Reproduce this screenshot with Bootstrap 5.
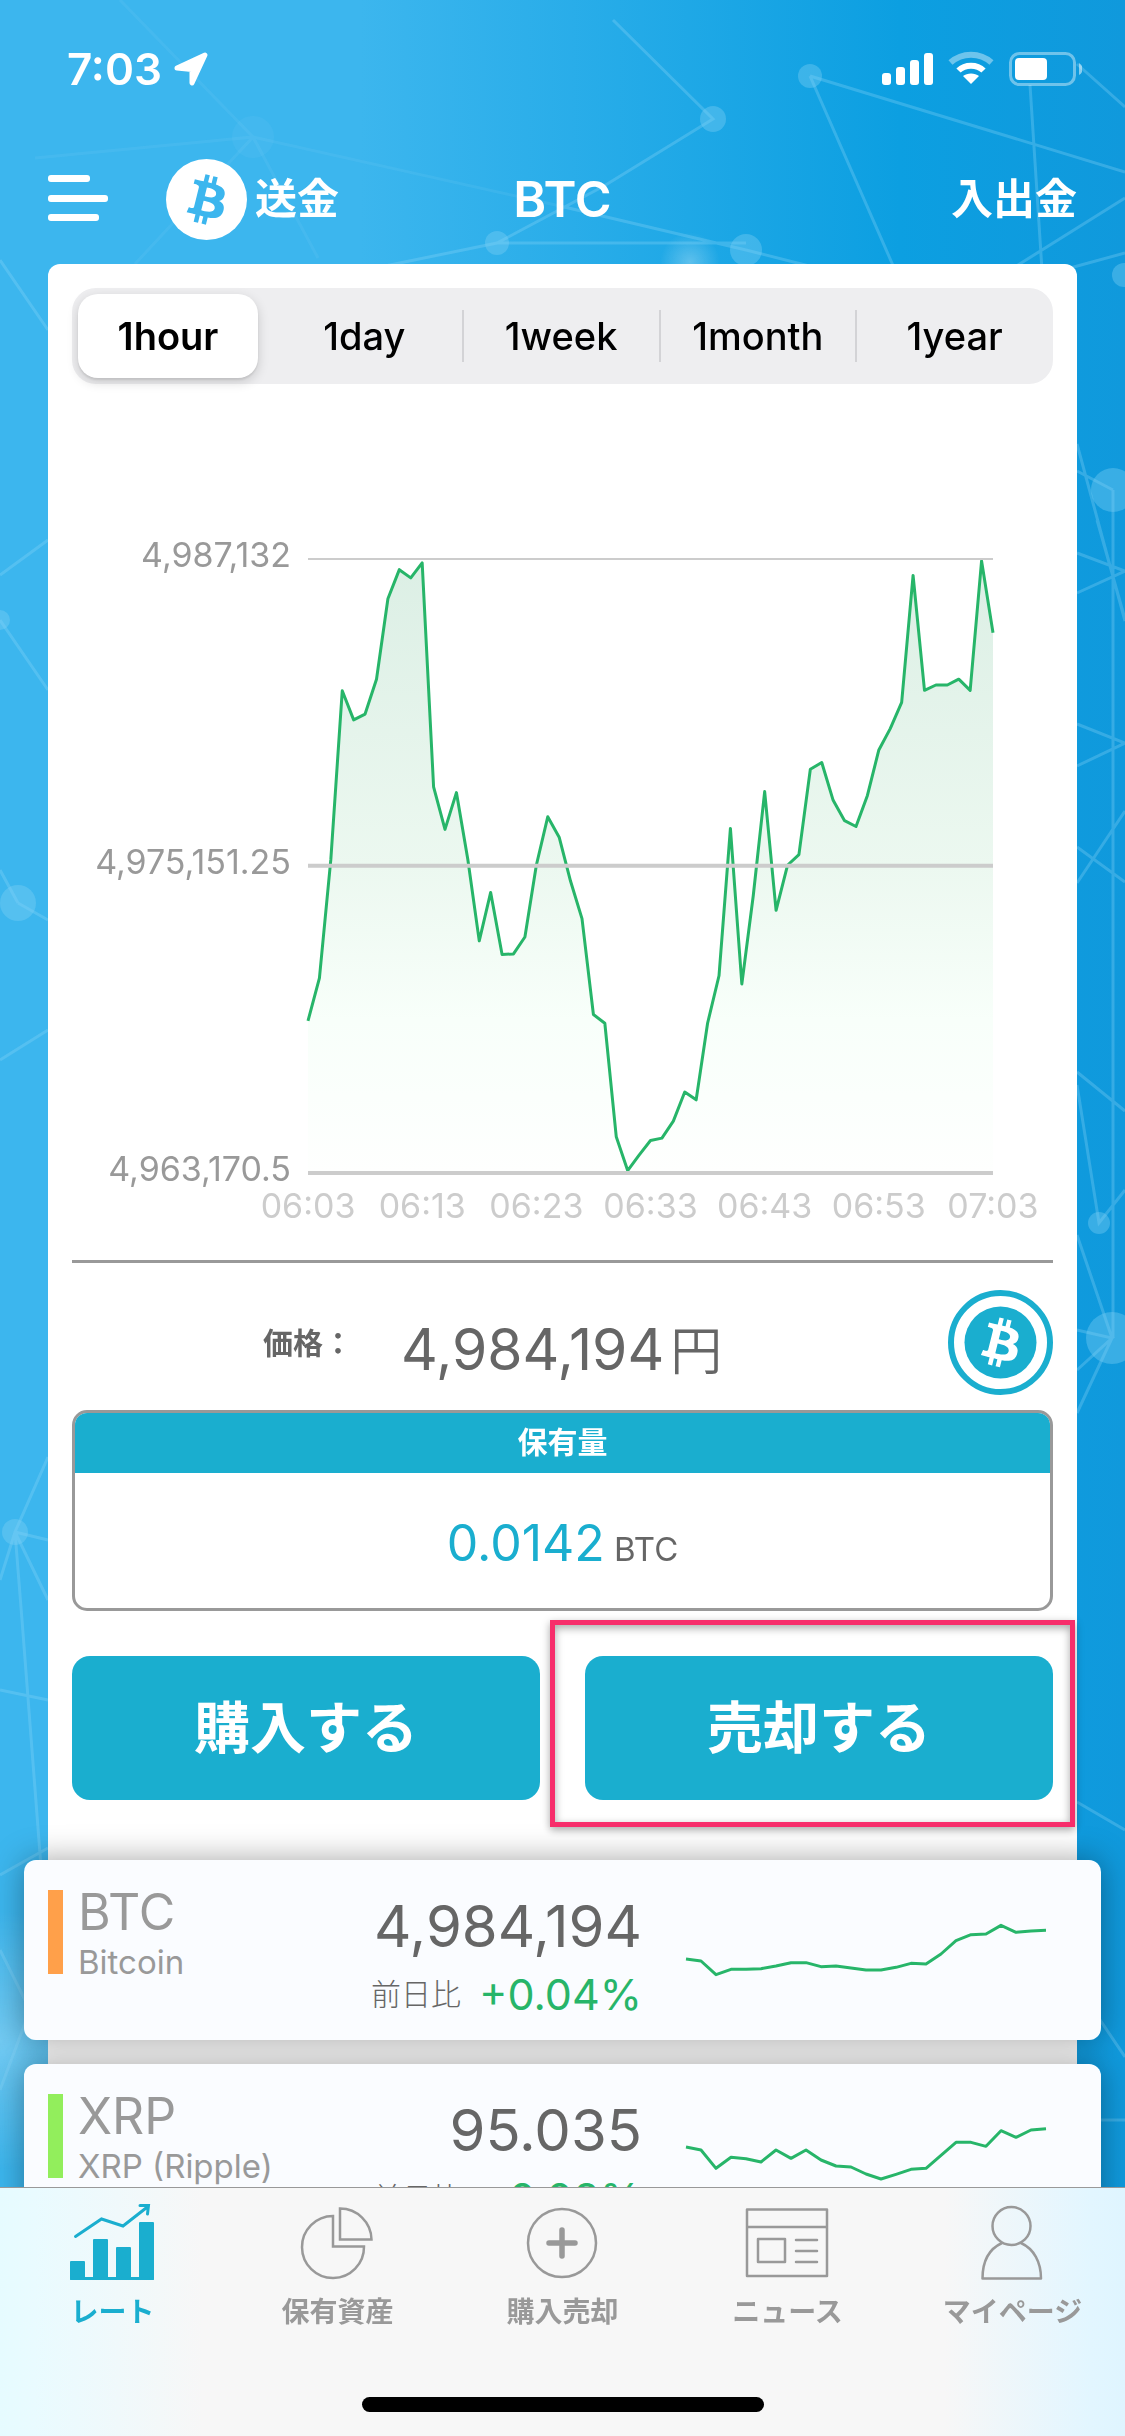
<!DOCTYPE html>
<html lang="ja">
<head>
<meta charset="utf-8">
<meta name="viewport" content="width=device-width, initial-scale=1">
<title>BTC レート</title>
<link href="https://cdn.jsdelivr.net/npm/bootstrap@5.3.0/dist/css/bootstrap.min.css" rel="stylesheet">
<style>
  :root { --teal: #1aaecf; --ink: #666; --soft: #999; --up: #27b569; }
  body { font-family: Inter, "Noto Sans CJK JP", sans-serif; color: var(--ink); line-height: 1;
    background: linear-gradient(90deg, #3cb6ee 0, #3cb6ee 32%, #0c9fe1 80%, #1099dc 100%); }
  a { color: inherit; text-decoration: none; }
  svg { display: block; }
  .network { z-index: -1; }

  .status-bar { height: 140px; padding: 47px 43px 0 67px; }
  .status-bar > div { height: 44px; }
  .clock { font-size: 44px; font-weight: 600; }
  .top-nav { height: 118px; margin-bottom: 6px; padding: 0 48px; font-size: 42px; font-weight: 700; }
  .top-nav > * { flex: 1 1 0; }
  .top-nav h1 { font-size: 50px; font-weight: 600; margin: 0; }
  .menu-btn { background: none; border: 0; padding: 0; margin-right: 58px; }

  .panel { background: #fff; margin: 0 48px; padding: 24px 24px 0; border-radius: 12px 12px 0 0; min-height: 1924px; }
  .periods { background: #eeeef0; border-radius: 24px; height: 96px; padding: 6px 0 6px 6px; }
  .periods label { flex: 1 1 0; border-radius: 20px; font-size: 38px; font-weight: 500; color: #000; position: relative; }
  .periods label.split::before { content: ""; position: absolute; left: -1px; top: 16px; height: 52px; width: 2px; background: #d3d3d6; }
  .periods label.first { flex: 0 0 180px; margin-right: 8px; }
  .periods .btn-check:checked + label { background: #fff; font-weight: 600; box-shadow: 0 4px 12px rgba(0,0,0,.16), 0 2px 2px rgba(0,0,0,.08); }

  .chart { margin-top: 153px; gap: 17px; padding-right: 60px; }
  .y-axis { width: 219px; height: 650px; font-size: 34px; line-height: 36px; color: var(--soft); }
  .plot { height: 614px; margin-top: 22px; overflow: visible; }
  .x-axis { margin: 1px 3px 0 179px; font-size: 34px; line-height: 36px; color: #ccc; }
  .x-axis span { flex: 1 1 0; text-align: center; }
  .rule { height: 3px; background: var(--soft); margin-top: 36px; }
  .price-row { padding: 27px 0 15px 191px; }
  .price-row dt { font-size: 30px; font-weight: 600; }
  .price-row dd { font-size: 57px; line-height: 60px; padding-top: 16px; margin: 0 0 0 48px; }
  .price-row small { font-size: 52px; font-weight: 350; margin-left: 6px; }

  .holding { border: 3px solid var(--soft); border-radius: 15px; overflow: hidden; }
  .holding h2 { background: var(--teal); color: #fff; font-size: 30px; font-weight: 700; line-height: 58px; height: 60px; margin: 0; text-align: center; }
  .holding p { height: 135px; line-height: 140px; margin: 0; text-align: center; font-size: 33px; }
  .holding b { font-size: 50px; font-weight: 400; color: var(--teal); }

  .trade { margin-top: 45px; gap: 45px; }
  .trade > div { flex: 1 1 0; position: relative; }
  .trade-btn { height: 144px; border-radius: 18px; background: var(--teal); color: #fff; font-size: 56px; font-weight: 700; border: 0; }
  .trade-btn:hover { background: #159cba; color: #fff; }
  .callout-frame { position: absolute; inset: -36px -22px -27px -35px; border: 5px solid #f72d6b; pointer-events: none;
    box-shadow: 0 3px 8px rgba(0,0,0,.35), inset 0 3px 8px rgba(0,0,0,.35); }

  .coin-list { margin: 60px -48px 0; gap: 24px; isolation: isolate; }
  .coin-item { position: relative; height: 180px; flex: none; display: grid; grid-template-columns: 1fr 1fr 360px; column-gap: 44px;
    padding: 30px 55px 0 24px; background: #fafcff; border-radius: 12px; }
  .coin-item::before { content: ""; position: absolute; inset: 0; z-index: -1; border-radius: 12px; box-shadow: 0 0 32px rgba(0,0,0,.36); }
  .coin-tag { width: 15px; height: 84px; margin-right: 15px; }
  .tag-btc { background: #ffa04a; }
  .tag-xrp { background: #92ee5c; }
  .coin-code { font-size: 50px; line-height: 44px; color: var(--soft); font-weight: 400; }
  .coin-name { font-size: 33px; line-height: 40px; color: var(--soft); margin-top: 8px; white-space: nowrap; }
  .coin-price { font-size: 58px; line-height: 60px; padding-top: 6px; }
  .coin-diff { font-size: 30px; line-height: 44px; margin-top: 16px; white-space: nowrap; font-weight: 300; gap: 18px; }
  .coin-diff span { font-size: 43px; color: var(--up); font-weight: 400; }
  .spark { height: 55px; margin-top: 33px; overflow: visible; }

  .tab-bar { height: 249px; border-top: 1px solid #999; padding: 16px 0 24px;
    background: linear-gradient(90deg, #e6fbff 0, #e9fbff 3%, #f7f7f7 18%, #f7f7f7 84%, #e2f6ff 97%, #dff5ff 100%); }
  .tab-bar a { flex: 1 1 0; gap: 12px; font-size: 28px; line-height: 36px; font-weight: 700; color: var(--soft); }
  .tab-bar a.active { color: var(--teal); }
  .home-bar { width: 402px; height: 15px; border-radius: 8px; background: #000; }
</style>
</head>
<body class="vh-100 d-flex flex-column overflow-hidden">

<svg class="network position-fixed top-0 start-0 w-100 h-100" viewBox="0 0 1125 2436" preserveAspectRatio="none" aria-hidden="true">
  <defs>
    <radialGradient id="glow"><stop offset="0" stop-color="#fff" stop-opacity=".28"/><stop offset="1" stop-color="#fff" stop-opacity="0"/></radialGradient>
  </defs>
  <circle cx="690" cy="262" r="30" fill="url(#glow)"/>
  <circle cx="0" cy="2040" r="130" fill="url(#glow)"/>
  <g stroke="#8fd6f8" stroke-opacity=".3" stroke-width="3" fill="none">
    <path stroke-opacity=".12" d="M253 137L35 158M253 137L120 0M253 137L135 264M253 137L318 258M253 137L560 206"/>
    <path d="M560 206L746 250L825 270M613 20L713 119L604 186L497 243H746M497 243L385 266M810 76L1125 172M810 76L895 270M1030 85L1042 270M1077 64L1125 107M1125 198L1010 270M1070 268L1125 253"/>
    <path d="M1077 444L1125 621M1077 471L1113 490M1097 520L1125 619M1077 553L1125 571L1077 593M1077 724L1125 743L1077 766M1077 847L1125 882M1077 883L1125 811M1077 1072L1125 1111M1077 1085L1099 1223L1125 1190M1077 1235L1112 1338M1077 1330L1112 1338L1077 1370M1112 1338L1077 1413M1113 490V1338M1077 1802L1125 1830M1090 2005L1125 2057M1095 2120H1125"/>
    <path d="M0 260L48 330M0 575L48 540M0 620L48 690M18 903L48 920M18 903L0 870M48 1457L15 1532L0 1580M15 1532L48 1540M15 1532L48 1600M15 1532L22 1620L42 1880M0 1690L48 1700M0 1875L48 1848M0 1950L30 2010L0 2090M0 1060L48 1030"/>
  </g>
  <g fill="#7fcff5" fill-opacity=".38">
    <circle cx="253" cy="137" r="21" fill-opacity=".12"/><circle cx="713" cy="119" r="13"/><circle cx="810" cy="76" r="12"/>
    <circle cx="497" cy="243" r="12"/><circle cx="746" cy="250" r="16"/><circle cx="1113" cy="490" r="22"/>
    <circle cx="1099" cy="1223" r="11"/><circle cx="1112" cy="1338" r="26"/><circle cx="0" cy="620" r="10"/>
    <circle cx="18" cy="903" r="18"/><circle cx="15" cy="1532" r="13"/><circle cx="1124" cy="275" r="12"/>
  </g>
</svg>

<div class="flex-fill overflow-hidden" style="min-height:0">
  <div class="status-bar d-flex justify-content-between text-white">
    <div class="d-flex align-items-center">
      <span class="clock">7:03</span>
      <svg class="ms-2" width="40" height="36" viewBox="0 0 40 36" fill="#fff" stroke="#fff" stroke-width="5" stroke-linejoin="round"><path d="M35 4L22 32V18.500L7 17Z"/></svg>
    </div>
    <div class="d-flex align-items-center">
      <svg width="200" height="36" viewBox="0 0 200 36">
        <g fill="#fff">
          <rect x="0" y="22" width="9" height="12" rx="3"/><rect x="14" y="16" width="9" height="18" rx="3"/>
          <rect x="28" y="9" width="9" height="25" rx="3"/><rect x="42" y="2" width="9" height="32" rx="3"/>
          <path d="M81 26C85 22.500 93 22.500 97 26L89 34Z" transform="translate(0 -1)"/>
          <rect x="133" y="7" width="32" height="22" rx="4"/><path d="M197 12C202 15 202 21 197 24Z" opacity=".5"/>
        </g>
        <g fill="none" stroke="#fff">
          <path d="M76.500 19.500C83 13 95 13 101.500 19.500" stroke-width="6"/>
          <path d="M68.500 11.500C80 1 98 1 109.500 11.500" stroke-width="6" opacity=".4"/>
          <rect x="128.500" y="2.500" width="64" height="31" rx="9" stroke-width="3" opacity=".4"/>
        </g>
      </svg>
    </div>
  </div>

  <nav class="top-nav d-flex align-items-center text-white">
    <div class="d-flex align-items-center">
      <button class="menu-btn" type="button" aria-label="メニュー">
        <svg width="60" height="48" viewBox="0 0 60 48" fill="#fff"><rect width="42" height="7" rx="3"/><rect y="20" width="60" height="7" rx="3"/><rect y="39" width="51" height="7" rx="3"/></svg>
      </button>
      <a href="#" class="d-flex align-items-center text-nowrap">
        <svg class="me-2 flex-shrink-0" width="81" height="81" viewBox="0 0 32 32"><circle cx="16" cy="16" r="16" fill="#fff"/>
          <path fill="#3cb6ee" d="M23.189 14.02c.314-2.096-1.283-3.223-3.465-3.975l.708-2.84-1.728-.43-.69 2.765c-.454-.114-.92-.22-1.385-.326l.695-2.783L15.596 6l-.708 2.839c-.376-.086-.746-.17-1.104-.26l.002-.009-2.384-.595-.46 1.846s1.283.294 1.256.312c.7.175.826.638.805 1.006l-.806 3.235c.048.012.11.03.18.057l-.183-.045-1.13 4.532c-.086.212-.303.531-.793.41.018.025-1.256-.313-1.256-.313l-.858 1.978 2.25.561c.418.105.828.215 1.231.318l-.715 2.872 1.727.43.708-2.84c.472.127.93.245 1.378.357l-.706 2.828 1.728.43.715-2.866c2.948.558 5.164.333 6.097-2.333.752-2.146-.037-3.385-1.588-4.192 1.13-.26 1.98-1.003 2.207-2.538zm-3.95 5.538c-.533 2.147-4.148.986-5.32.695l.95-3.805c1.172.293 4.929.872 4.37 3.11zm.535-5.569c-.487 1.953-3.495.96-4.47.717l.86-3.45c.975.243 4.118.696 3.61 2.733z"/></svg>
        送金</a>
    </div>
    <h1 class="text-center">BTC</h1>
    <a href="#" class="text-end">入出金</a>
  </nav>

  <main class="panel">
    <div class="periods d-flex" role="group" aria-label="期間">
      <input type="radio" class="btn-check" name="period" id="p1" checked><label for="p1" class="first d-flex align-items-center justify-content-center">1hour</label>
      <input type="radio" class="btn-check" name="period" id="p2"><label for="p2" class="d-flex align-items-center justify-content-center">1day</label>
      <input type="radio" class="btn-check" name="period" id="p3"><label for="p3" class="split d-flex align-items-center justify-content-center">1week</label>
      <input type="radio" class="btn-check" name="period" id="p4"><label for="p4" class="split d-flex align-items-center justify-content-center">1month</label>
      <input type="radio" class="btn-check" name="period" id="p5"><label for="p5" class="split d-flex align-items-center justify-content-center">1year</label>
    </div>

    <div class="chart d-flex">
      <div class="y-axis d-flex flex-column justify-content-between text-end flex-shrink-0">
        <span>4,987,132</span><span>4,975,151.25</span><span>4,963,170.5</span>
      </div>
      <svg class="plot flex-fill" viewBox="0 80 60 1267" preserveAspectRatio="none" width="100" role="img" aria-label="BTC 1時間チャート">
        <defs><linearGradient id="area" x1="0" y1="0" x2="0" y2="1"><stop offset="0" stop-color="#dcefe5"/><stop offset=".5" stop-color="#ecf8f0"/><stop offset=".75" stop-color="#f8fffa"/><stop offset="1" stop-color="#fefffe"/></linearGradient></defs>
        <polygon fill="url(#area)" points="0,1347 0,1033 1,945 2,700 3,352 4,412 5,400 6,328 7,162 8,102 9,119 10,88 11,550 12,638 13,562 14,700 15,868 16,768 17,896 18,895 19,860 20,712 21,612 22,654 23,745 24,822 25,1020 26,1038 27,1272 28,1342 29,1310 30,1280 31,1275 32,1240 33,1180 34,1196 35,1038 36,940 37,636 38,957 39,775 40,560 41,805 42,712 43,690 44,514 45,500 46,578 47,620 48,632 49,568 50,474 51,430 52,376 53,114 54,351 55,340 56,340 57,328 58,351 59,84 60,232 60,1347"/>
        <polyline fill="none" stroke="#27b569" stroke-width="3" stroke-linejoin="round" vector-effect="non-scaling-stroke" points="0,1033 1,945 2,700 3,352 4,412 5,400 6,328 7,162 8,102 9,119 10,88 11,550 12,638 13,562 14,700 15,868 16,768 17,896 18,895 19,860 20,712 21,612 22,654 23,745 24,822 25,1020 26,1038 27,1272 28,1342 29,1310 30,1280 31,1275 32,1240 33,1180 34,1196 35,1038 36,940 37,636 38,957 39,775 40,560 41,805 42,712 43,690 44,514 45,500 46,578 47,620 48,632 49,568 50,474 51,430 52,376 53,114 54,351 55,340 56,340 57,328 58,351 59,84 60,232"/>
        <g stroke="#ccc"><path d="M0 80H60" stroke-width="2" vector-effect="non-scaling-stroke"/><path d="M0 713H60M0 1347H60" stroke-width="4" vector-effect="non-scaling-stroke"/></g>
      </svg>
    </div>
    <div class="x-axis d-flex"><span>06:03</span><span>06:13</span><span>06:23</span><span>06:33</span><span>06:43</span><span>06:53</span><span>07:03</span></div>
    <div class="rule"></div>

    <div class="price-row d-flex align-items-center">
      <dl class="d-flex align-items-center m-0"><dt>価格：</dt><dd>4,984,194<small>円</small></dd></dl>
      <svg class="ms-auto" width="105" height="105" viewBox="0 0 105 105"><circle cx="52.500" cy="52.500" r="49.500" fill="#fff" stroke="#1aaecf" stroke-width="6"/><circle cx="52.500" cy="52.500" r="36" fill="#1aaecf"/>
        <path fill="#fff" transform="translate(12.500 12.500) scale(2.5)" d="M23.189 14.02c.314-2.096-1.283-3.223-3.465-3.975l.708-2.84-1.728-.43-.69 2.765c-.454-.114-.92-.22-1.385-.326l.695-2.783L15.596 6l-.708 2.839c-.376-.086-.746-.17-1.104-.26l.002-.009-2.384-.595-.46 1.846s1.283.294 1.256.312c.7.175.826.638.805 1.006l-.806 3.235c.048.012.11.03.18.057l-.183-.045-1.13 4.532c-.086.212-.303.531-.793.41.018.025-1.256-.313-1.256-.313l-.858 1.978 2.25.561c.418.105.828.215 1.231.318l-.715 2.872 1.727.43.708-2.84c.472.127.93.245 1.378.357l-.706 2.828 1.728.43.715-2.866c2.948.558 5.164.333 6.097-2.333.752-2.146-.037-3.385-1.588-4.192 1.13-.26 1.98-1.003 2.207-2.538zm-3.95 5.538c-.533 2.147-4.148.986-5.32.695l.95-3.805c1.172.293 4.929.872 4.37 3.11zm.535-5.569c-.487 1.953-3.495.96-4.47.717l.86-3.45c.975.243 4.118.696 3.61 2.733z"/></svg>
    </div>

    <section class="holding">
      <h2>保有量</h2>
      <p><b>0.0142</b> BTC</p>
    </section>

    <div class="trade d-flex">
      <div><button type="button" class="btn trade-btn w-100">購入する</button></div>
      <div><button type="button" class="btn trade-btn w-100">売却する</button><div class="callout-frame"></div></div>
    </div>

    <div class="coin-list d-flex flex-column">
      <article class="coin-item">
        <div class="d-flex"><div class="coin-tag tag-btc"></div><div><div class="coin-code">BTC</div><div class="coin-name">Bitcoin</div></div></div>
        <div class="text-end"><div class="coin-price">4,984,194</div><div class="coin-diff d-flex justify-content-end align-items-center">前日比 <span>+0.04%</span></div></div>
        <svg class="spark w-100" viewBox="0 279 24 165" preserveAspectRatio="none"><polyline fill="none" stroke="#27b569" stroke-width="3" stroke-linejoin="round" vector-effect="non-scaling-stroke" points="0,387 1,393 2,434 3,418 4,418 5,416 6,408 7,398 8,398 9,410 10,408 11,414 12,420 13,420 14,412 15,400 16,402 17,372 18,332 19,314 20,312 21,286 22,307 23,303 24,301"/></svg>
      </article>
      <article class="coin-item">
        <div class="d-flex"><div class="coin-tag tag-xrp"></div><div><div class="coin-code">XRP</div><div class="coin-name">XRP (Ripple)</div></div></div>
        <div class="text-end"><div class="coin-price">95.035</div><div class="coin-diff d-flex justify-content-end align-items-center">前日比 <span>+0.08%</span></div></div>
        <svg class="spark w-100" viewBox="0 891 24 165" preserveAspectRatio="none"><polyline fill="none" stroke="#27b569" stroke-width="3" stroke-linejoin="round" vector-effect="non-scaling-stroke" points="0,951 1,960 2,1015 3,982 4,986 5,996 6,960 7,985 8,960 9,990 10,1008 11,1011 12,1032 13,1047 14,1033 15,1018 16,1015 17,976 18,937 19,937 20,949 21,902 22,922 23,900 24,896"/></svg>
      </article>
    </div>
  </main>
</div>

<footer class="tab-bar d-flex flex-column justify-content-between align-items-center flex-shrink-0">
  <nav class="d-flex w-100">
    <a href="#" class="active d-flex flex-column align-items-center">
      <svg width="90" height="78" viewBox="1 0 90 78" fill="#1aaecf"><rect x="3" y="57" width="15" height="19" rx="1"/><rect x="26" y="35" width="15" height="40" rx="1"/><rect x="49" y="43" width="15" height="32" rx="1"/><rect x="72" y="18" width="15" height="58" rx="1"/><rect x="3" y="73" width="84" height="3" rx="1"/><path d="M8.500 32.500L34.500 15L56 22L81 2.500M73 1.500H81.500L80.500 10" fill="none" stroke="#1aaecf" stroke-width="3" stroke-linecap="round"/></svg>レート</a>
    <a href="#" class="d-flex flex-column align-items-center">
      <svg width="90" height="78" viewBox="1 0 90 78" fill="none" stroke="#999" stroke-width="2.500"><path d="M41 12A31 31 0 1 0 72 42.500H41ZM48 4.500A31.500 31.500 0 0 1 79.500 35.500H48Z"/></svg>保有資産</a>
    <a href="#" class="d-flex flex-column align-items-center">
      <svg width="90" height="78" viewBox="1 0 90 78" fill="none" stroke="#999"><circle cx="45" cy="39" r="34" stroke-width="2.500"/><path d="M32 39H58M45 26V52" stroke-width="5.500" stroke-linecap="round"/></svg>購入売却</a>
    <a href="#" class="d-flex flex-column align-items-center">
      <svg width="90" height="78" viewBox="1 0 90 78" fill="none" stroke="#999" stroke-width="2.500" stroke-linejoin="round" stroke-linecap="round"><path d="M5 5.500H85V72H5ZM5 23H85M16 35H43V58H16ZM54 36H75M54 47H75M54 58H75"/></svg>ニュース</a>
    <a href="#" class="d-flex flex-column align-items-center">
      <svg width="90" height="78" viewBox="1 0 90 78" fill="none" stroke="#999" stroke-width="2.500" stroke-linejoin="round"><circle cx="44.500" cy="22" r="19"/><path d="M35 39C22 45 15.500 58 15.500 74.500H74C74 58 67 45 54 39"/></svg>マイページ</a>
  </nav>
  <div class="home-bar"></div>
</footer>
<script src="https://cdn.jsdelivr.net/npm/bootstrap@5.3.0/dist/js/bootstrap.bundle.min.js"></script>
</body>
</html>
